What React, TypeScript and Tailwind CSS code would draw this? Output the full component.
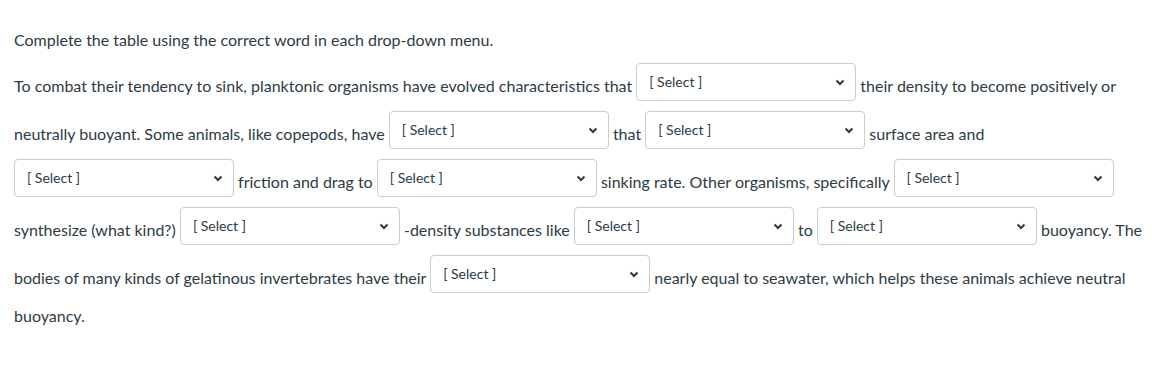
import React from "react";

function Dropdown() {
  return (
    <span className="my-[5px] inline-flex h-[38px] w-[220px] items-center justify-between rounded-[4px] border border-[#c7cdd1] bg-white pl-[12px] pr-[10px] align-[5px] text-[14px] text-[#2d3b45]">
      <span className="-mt-[2px]">[ Select ]</span>
      <svg width="10" height="7" viewBox="0 0 10 7" className="shrink-0">
        <polyline points="1.5,1.5 5,5 8.5,1.5" fill="none" stroke="#2d3b45" strokeWidth="2" />
      </svg>
    </span>
  );
}

export default function App() {
  return (
    <div className="min-h-[372px] bg-white px-[14px] pt-[28px] font-['Lato','Noto_Sans',sans-serif] text-[16px] leading-[24px] text-[#2d3b45]">
      <p>Complete the table using the correct word in each drop-down menu.</p>
      <p className="mt-[6px] leading-[35px]">
        To combat their tendency to sink, planktonic organisms have evolved characteristics that <Dropdown /> their
        density to become positively or neutrally buoyant. Some animals, like copepods, have <Dropdown /> that{" "}
        <Dropdown /> surface area and <Dropdown /> friction and drag to <Dropdown /> sinking rate. Other organisms,
        specifically <Dropdown /> synthesize (what kind?) <Dropdown /> -density substances like <Dropdown /> to{" "}
        <Dropdown /> buoyancy. The bodies of many kinds of gelatinous invertebrates have their <Dropdown /> nearly
        equal to seawater, which helps these animals achieve neutral buoyancy.
      </p>
    </div>
  );
}
